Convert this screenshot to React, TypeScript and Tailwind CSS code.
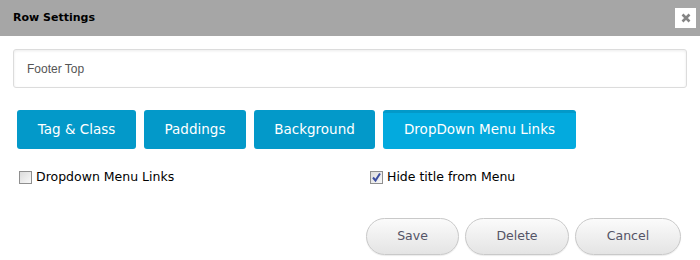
import React from "react";

type Tab = { label: string; width: string; active?: boolean };

const tabs: Tab[] = [
  { label: "Tag & Class", width: "w-[119px]" },
  { label: "Paddings", width: "w-[102px]" },
  { label: "Background", width: "w-[121px]" },
  { label: "DropDown Menu Links", width: "w-[193px]", active: true },
];

const Check: React.FC<{ checked?: boolean }> = ({ checked }) => (
  <span className="relative flex h-[13px] w-[13px] shrink-0 items-center justify-center border border-[#8f8f8f] bg-gradient-to-br from-[#dcdcdc] to-[#f8f8f8]">
    {checked && (
      <svg width="11" height="11" viewBox="0 0 11 11" className="absolute">
        <path d="M2 5.5 L4.5 8.5 L9 1.5" fill="none" stroke="#3c4ea0" strokeWidth="2" />
      </svg>
    )}
  </span>
);

const FooterButton: React.FC<{ label: string; width: string }> = ({ label, width }) => (
  <button
    type="button"
    className={`${width} h-[37px] rounded-full border border-[#c9c9c9] bg-gradient-to-b from-[#fbfbfb] to-[#e4e4e4] text-[12.5px] text-[#545466] shadow-[0_1px_1px_rgba(0,0,0,0.08)]`}
  >
    {label}
  </button>
);

export default function App() {
  return (
    <div className="h-[260px] w-[700px] bg-white font-['DejaVu_Sans',sans-serif]">
      <header className="flex h-[36px] items-center justify-between bg-[#a6a6a6] pl-[13px] pr-[4px]">
        <span className="text-[11px] font-bold text-black">Row Settings</span>
        <button type="button" className="flex h-[20px] w-[21px] items-center justify-center bg-white">
          <svg width="10" height="10" viewBox="0 0 10 10">
            <path d="M1.5 1.5 L8.5 8.5 M8.5 1.5 L1.5 8.5" stroke="#858585" strokeWidth="2.6" />
          </svg>
        </button>
      </header>

      <div className="px-[13px]">
        <div className="mt-[13px] flex h-[39px] items-center rounded-[3px] border border-[#dcdcdc] pl-[13px] font-['Liberation_Sans',sans-serif] text-[12px] text-[#555] shadow-[inset_0_1px_3px_rgba(0,0,0,0.08)]">
          Footer Top
        </div>

        <div className="mt-[22px] flex gap-[8px] pl-[4px]">
          {tabs.map((tab) => (
            <button
              key={tab.label}
              type="button"
              className={`${tab.width} h-[39px] rounded-[3px] text-[13.5px] text-white ${
                tab.active ? "border-t-[3px] border-[#0399c9] bg-[#03aade] pb-[3px]" : "bg-[#0399c9]"
              }`}
            >
              {tab.label}
            </button>
          ))}
        </div>

        <div className="mt-[19px] flex items-center text-[12.5px] text-black">
          <label className="flex w-[357px] items-center gap-[4px] pl-[6px]">
            <Check />
            <span>Dropdown Menu Links</span>
          </label>
          <label className="flex items-center gap-[4px]">
            <Check checked />
            <span>Hide title from Menu</span>
          </label>
        </div>

        <div className="mt-[31px] flex justify-end gap-[6px] pr-[6px]">
          <FooterButton label="Save" width="w-[93px]" />
          <FooterButton label="Delete" width="w-[104px]" />
          <FooterButton label="Cancel" width="w-[106px]" />
        </div>
      </div>
    </div>
  );
}
